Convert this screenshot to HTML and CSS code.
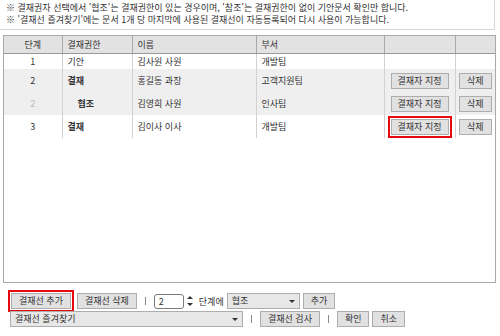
FILE: index.html
```html
<!DOCTYPE html>
<html lang="ko">
<head>
    <meta charset="UTF-8">
    <title>결재선 지정</title>
    <link rel="stylesheet" href="styles.css">
</head>
<body>
    <div class="notice">
        <p>※ 결재권자 선택에서 '협조'는 결재권한이 있는 경우이며, '참조'는 결재권한이 없이 기안문서 확인만 합니다.</p>
        <p>※ '결재선 즐겨찾기'에는 문서 1개 당 마지막에 사용된 결재선이 자동등록되어 다시 사용이 가능합니다.</p>
    </div>

    <div class="line-box">
        <table class="line-table">
            <colgroup>
                <col class="c-step">
                <col class="c-auth">
                <col class="c-name">
                <col class="c-dept">
                <col class="c-pick">
                <col class="c-del">
            </colgroup>
            <thead>
                <tr>
                    <th class="center">단계</th>
                    <th>결재권한</th>
                    <th>이름</th>
                    <th>부서</th>
                    <th></th>
                    <th></th>
                </tr>
            </thead>
            <tbody>
                <tr class="short">
                    <td class="center">1</td>
                    <td>기안</td>
                    <td>김사원 사원</td>
                    <td>개발팀</td>
                    <td></td>
                    <td></td>
                </tr>
                <tr class="shade">
                    <td class="center">2</td>
                    <td class="strong">결재</td>
                    <td>홍길동 과장</td>
                    <td>고객지원팀</td>
                    <td class="center"><button class="btn btn-pick">결재자 지정</button></td>
                    <td class="center"><button class="btn">삭제</button></td>
                </tr>
                <tr class="shade">
                    <td class="center dim">2</td>
                    <td class="strong sub">협조</td>
                    <td>김영희 사원</td>
                    <td>인사팀</td>
                    <td class="center"><button class="btn btn-pick">결재자 지정</button></td>
                    <td class="center"><button class="btn">삭제</button></td>
                </tr>
                <tr>
                    <td class="center">3</td>
                    <td class="strong">결재</td>
                    <td>김이사 이사</td>
                    <td>개발팀</td>
                    <td class="center"><span class="mark"><button class="btn btn-pick">결재자 지정</button></span></td>
                    <td class="center"><button class="btn">삭제</button></td>
                </tr>
            </tbody>
        </table>
    </div>

    <div class="toolbar">
        <div class="tool-row">
            <span class="mark mark-add"><button class="btn">결재선 추가</button></span>
            <button class="btn">결재선 삭제</button>
            <span class="sep"></span>
            <span class="spin">
                <span class="num">2</span>
                <svg class="arrows" width="6" height="12" viewBox="0 0 6 12">
                    <path d="M0 4 L3 1 L6 4 Z" fill="#333"/>
                    <path d="M0 8 L3 11 L6 8 Z" fill="#333"/>
                </svg>
            </span>
            <span class="label">단계에</span>
            <span class="select select-auth">협조<i class="caret"></i></span>
            <button class="btn">추가</button>
        </div>
        <div class="tool-row">
            <span class="select select-fav">결재선 즐겨찾기<i class="caret"></i></span>
            <span class="sep"></span>
            <button class="btn">결재선 검사</button>
            <span class="sep"></span>
            <button class="btn">확인</button>
            <button class="btn">취소</button>
        </div>
    </div>
</body>
</html>
```

FILE: styles.css
```css
body {
    margin: 0;
    font-family: "Noto Sans CJK KR", "Noto Sans", sans-serif;
    font-size: 9px;
    color: #333333;
    background: #ffffff;
}

.notice {
    width: 488px;
    padding: 2px 0 3px 6px;
    border-right: 1px solid #d6d6d6;
    border-bottom: 1px solid #d6d6d6;
}

.notice p {
    margin: 0;
    line-height: 12px;
}

.line-box {
    margin: 5px 4px 0 3px;
    height: 246px;
    border: 1px solid #a9a9a9;
}

.line-table {
    width: 100%;
    border-collapse: collapse;
    table-layout: fixed;
}

.c-step { width: 58px; }
.c-auth { width: 70px; }
.c-name { width: 124px; }
.c-dept { width: 128px; }
.c-pick { width: 71px; }

.line-table th {
    height: 17px;
    padding: 0 0 0 5px;
    background: #e2e2e2;
    font-weight: normal;
    text-align: left;
    border-left: 1px solid #a9a9a9;
    border-bottom: 1px solid #999999;
}

.line-table td {
    height: 23px;
    padding: 0 0 0 5px;
    border-left: 1px solid #d2d2d2;
    white-space: nowrap;
}

.line-table th:first-child,
.line-table td:first-child {
    border-left: none;
}

.line-table .center {
    text-align: center;
    padding-left: 0;
}

.line-table tr.short td {
    height: 15px;
}

.line-table tr.shade td {
    background: #efefef;
}

.strong {
    font-weight: bold;
}

.sub {
    padding-left: 15px !important;
}

.dim {
    color: #b8b8b8;
}

.btn {
    font-family: inherit;
    font-size: 9px;
    color: #333333;
    height: 16px;
    padding: 0 7px;
    background: #e1e1e1;
    border: 1px solid #adadad;
    border-radius: 0;
    line-height: 14px;
    vertical-align: middle;
}

.btn-pick {
    width: 58px;
    padding: 0;
}

.mark {
    display: inline-block;
    padding: 1px;
    border: 2px solid #e8090f;
    line-height: 0;
}

.toolbar {
    padding: 8px 0 0 9px;
}

.tool-row {
    display: flex;
    align-items: center;
    gap: 3px;
    height: 20px;
}

.tool-row + .tool-row {
    height: 16px;
    padding-left: 1px;
}

.mark-add {
    margin-left: -1px;
}

.sep {
    width: 1px;
    height: 8px;
    background: #8a8a8a;
    margin: 0 5px;
}

.spin {
    display: flex;
    align-items: center;
    gap: 3px;
}

.num {
    width: 24px;
    height: 13px;
    padding-left: 4px;
    line-height: 13px;
    border: 1px solid #7a7a7a;
    border-radius: 3px;
    background: #ffffff;
}

.arrows {
    margin-right: 3px;
}

.select {
    position: relative;
    height: 14px;
    line-height: 14px;
    padding-left: 4px;
    background: #e7e7e7;
    border: 1px solid #adadad;
}

.select-auth {
    width: 67px;
}

.select-fav {
    width: 227px;
}

.caret {
    position: absolute;
    right: 4px;
    top: 6px;
    border-left: 3px solid transparent;
    border-right: 3px solid transparent;
    border-top: 3px solid #333333;
}
```
